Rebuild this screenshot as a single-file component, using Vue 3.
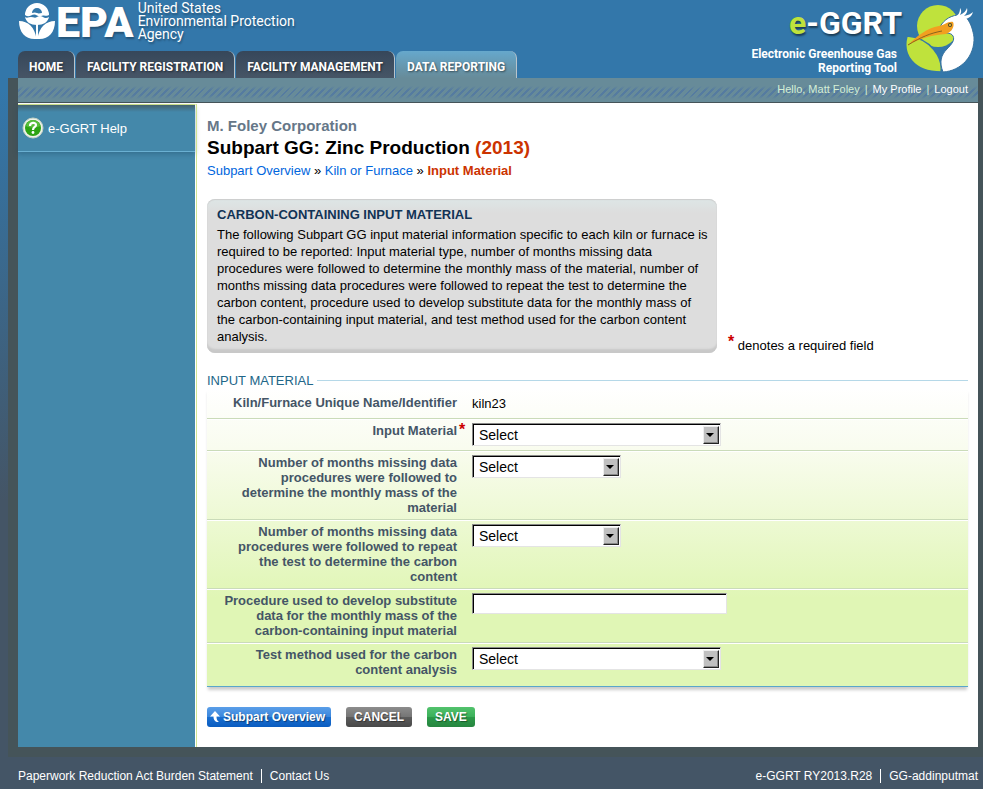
<script setup>
// Subpart GG data entry page: site header, help sidebar and the input
// material form. The form rows are driven by the list below.
import { reactive } from 'vue'

const tabs = [
  { label: 'HOME' },
  { label: 'FACILITY REGISTRATION' },
  { label: 'FACILITY MANAGEMENT' },
  { label: 'DATA REPORTING', active: true },
]

const fields = [
  { id: 'material', type: 'select', wide: true, required: true, label: 'Input Material' },
  {
    id: 'massMonths',
    type: 'select',
    label: 'Number of months missing data procedures were followed to determine the monthly mass of the material',
  },
  {
    id: 'carbonMonths',
    type: 'select',
    label: 'Number of months missing data procedures were followed to repeat the test to determine the carbon content',
  },
  {
    id: 'procedure',
    type: 'text',
    label: 'Procedure used to develop substitute data for the monthly mass of the carbon-containing input material',
  },
  { id: 'testMethod', type: 'select', wide: true, label: 'Test method used for the carbon content analysis' },
]

const form = reactive({ material: '', massMonths: '', carbonMonths: '', procedure: '', testMethod: '' })
</script>

<template>
  <div class="page">
    <header class="header">
      <div class="header-left">
        <a href="#" class="epa">
          <svg class="epa-mark" width="38" height="38" viewBox="0 0 38 38" aria-hidden="true">
            <path d="M7 12a12 12 0 0 1 24 0c-2 1.500-4 0-6 .5s-4 1.500-6 0-4-1-6 0-4 1-6-.5z" fill="#fff" />
            <path d="M14 10a5 5 0 0 1 10 0c-2 0-3 1-5 0s-3-.5-5 0z" fill="#37a" />
            <path d="M7 14c2 1.500 4 0 6 0s4 1.500 6 0 4-1.500 6 0 4 1 6 0c-1 5-5.500 8-12 8S8 19 7 14z" fill="#fff" />
            <path d="M1 18c9 0 16 6 17.500 18C8 37 1 30 1 18zM37 18c-9 0-16 6-17.500 18C30 37 37 30 37 18z" fill="#fff" />
            <path d="M19 21v15" stroke="#fff" stroke-width="2" />
          </svg>
          <span class="epa-name">EPA</span>
          <span class="epa-full">United States<br />Environmental Protection<br />Agency</span>
        </a>
        <nav class="tabs">
          <a v-for="t in tabs" :key="t.label" href="#" class="tab" :class="{ active: t.active }">{{ t.label }}</a>
        </nav>
      </div>
      <div class="brand">
        <div class="brand-text">
          <div class="brand-name"><span>e</span>-GGRT</div>
          <div class="brand-sub">Electronic Greenhouse Gas<br />Reporting Tool</div>
        </div>
        <svg class="heron" width="72" height="74" viewBox="0 0 72 74" aria-hidden="true">
          <circle cx="33" cy="24" r="21" fill="#bfe23c" />
          <path d="M2 34C-3 52 8 70 36 70 38 56 26 36 2 34z" fill="#bfe23c" stroke="#37a" stroke-width="1.500" />
          <path
            d="M34 27C37 20 43 14 53 13 62 12 67 22 69 35 70 54 56 69 38 70 34 60 36 53 42 47 47 42 50 38 48 34 46 30 39 31 34 31z"
            fill="#fff"
            stroke="#37729f"
            stroke-width="1"
          />
          <path d="M48 15c6-1 7-5 7-9 2 3 1 5 0 7 4-2 6-4 7-7 1 4-1 6-3 8 4-1 7-2 9-4-1 4-4 6-7 7-4 1-9 1-13-2z" fill="#fff" />
          <path d="M3 43C12 34 22 26 34 24c6-1 9-5 14-4 2 4-1 10-7 12C27 33 16 36 3 43z" fill="#f29f20" />
          <path d="M3 43c13-8 23-12 34-14" fill="none" stroke="#8b641d" stroke-width="1" />
          <circle cx="45" cy="23" r="2" fill="#47432a" />
          <circle cx="45" cy="23" r="1" fill="#f7d33b" />
        </svg>
      </div>
    </header>

    <div class="frame">
      <div class="user-bar">
        <span class="hello">Hello, Matt Foley</span>
        <span>|</span>
        <a href="#">My Profile</a>
        <span>|</span>
        <a href="#">Logout</a>
      </div>

      <div class="body">
        <aside class="sidebar">
          <a href="#" class="help">
            <svg width="22" height="22" viewBox="0 0 22 22" aria-hidden="true">
              <circle cx="11" cy="11" r="10" fill="#eef3ea" stroke="#c5d2c4" />
              <circle cx="11" cy="11" r="8" fill="#2da313" />
              <path d="M4 9a7 6 0 0 1 14 0c-4 2-10 2-14 0z" fill="#58bd3a" />
              <path d="M8 9c0-4 6-4 6-1 0 2-3 2-3 5" fill="none" stroke="#fff" stroke-width="2.200" />
              <circle cx="11" cy="15.500" r="1.400" fill="#fff" />
            </svg>
            e-GGRT Help
          </a>
        </aside>

        <main class="content">
          <div class="company">M. Foley Corporation</div>
          <h1>Subpart GG: Zinc Production <span>(2013)</span></h1>
          <nav class="crumbs">
            <a href="#">Subpart Overview</a> » <a href="#">Kiln or Furnace</a> » <strong>Input Material</strong>
          </nav>

          <div class="intro">
            <section class="info">
              <h2>CARBON-CONTAINING INPUT MATERIAL</h2>
              <p>
                The following Subpart GG input material information specific to each kiln or furnace is
                required to be reported: Input material type, number of months missing data
                procedures were followed to determine the monthly mass of the material, number of
                months missing data procedures were followed to repeat the test to determine the
                carbon content, procedure used to develop substitute data for the monthly mass of
                the carbon-containing input material, and test method used for the carbon content
                analysis.
              </p>
            </section>
            <div class="required-note"><span class="star">*</span> denotes a required field</div>
          </div>

          <form @submit.prevent>
            <div class="legend">INPUT MATERIAL</div>
            <div class="rows">
              <div class="row first">
                <span class="label">Kiln/Furnace Unique Name/Identifier</span>
                <span class="value">kiln23</span>
              </div>
              <div v-for="f in fields" :key="f.id" class="row">
                <label class="label" :for="f.id">{{ f.label }}<span v-if="f.required" class="star">*</span></label>
                <span v-if="f.type === 'select'" class="select" :class="{ wide: f.wide }">
                  <select :id="f.id" v-model="form[f.id]">
                    <option value="">Select</option>
                  </select>
                </span>
                <input v-else :id="f.id" v-model="form[f.id]" type="text" />
              </div>
            </div>

            <div class="actions">
              <button type="button" class="btn blue">
                <svg width="10" height="12" viewBox="0 0 10 12" aria-hidden="true">
                  <path d="M5 0l5 5.500H6.500C6.500 8 7 10 9 11 5.500 11.500 3.500 9 3.500 5.500H0z" fill="#fff" />
                </svg>
                Subpart Overview
              </button>
              <button type="button" class="btn gray">CANCEL</button>
              <button type="submit" class="btn green">SAVE</button>
            </div>
          </form>
        </main>
      </div>
    </div>

    <footer class="footer">
      <div class="footer-group">
        <a href="#">Paperwork Reduction Act Burden Statement</a>
        <a href="#">Contact Us</a>
      </div>
      <div class="footer-group">
        <span>e-GGRT RY2013.R28</span>
        <span>GG-addinputmat</span>
      </div>
    </footer>
  </div>
</template>

<style>
body {
  margin: 0;
  background: #456;
}
</style>

<style scoped>
.page {
  min-height: 100vh;
  background: linear-gradient(#37a 0, #37a 90px, #456 500px);
  font-family: "Liberation Sans", Arial, sans-serif;
  font-size: 13px;
  color: #000;
}
a {
  color: #06d;
  text-decoration: none;
}

/* header */
.header {
  display: flex;
  justify-content: space-between;
  height: 78px;
  padding: 0 6px 0 18px;
  color: #fff;
}
.header-left {
  display: flex;
  flex-direction: column;
  justify-content: space-between;
}
.epa {
  display: flex;
  color: #fff;
  text-shadow: 1px 2px 2px rgba(0, 0, 0, 0.3);
}
.epa-mark {
  margin-top: 3px;
}
.epa-name {
  font: 900 43px/44px Roboto, "Liberation Sans", sans-serif;
}
.epa-full {
  margin: 2px 0 0 4px;
  font: 14px/13px Roboto, "Liberation Sans", sans-serif;
}
.tabs {
  display: flex;
  gap: 1px;
}
.tab {
  height: 27px;
  padding: 0 11px;
  border-right: 1px solid #b8c4cc;
  border-radius: 7px 7px 0 0;
  background: linear-gradient(#36475a, #465566);
  color: #fff;
  font: bold 12px/32px Roboto, "Liberation Sans", sans-serif;
  text-shadow: 1px 1px 2px rgba(0, 0, 0, 0.5);
}
.tab.active {
  background: linear-gradient(#66a8cc, #678b99);
}
.brand {
  display: flex;
  gap: 3px;
  text-align: right;
}
.brand-name {
  font: bold 32px/47px Roboto, "Liberation Sans", sans-serif;
  text-shadow: 1px 2px 2px rgba(0, 0, 0, 0.5);
}
.brand-name span {
  color: #bfe23c;
}
.brand-sub {
  padding-right: 5px;
  font: bold 12px/14px Roboto, "Liberation Sans", sans-serif;
}
.heron {
  margin-top: 2px;
}

/* framed page area */
.frame {
  margin-left: 8px;
  border: solid #455459;
  border-width: 0 5px 10px 10px;
}
.user-bar {
  display: flex;
  justify-content: flex-end;
  gap: 5px;
  height: 24px;
  padding-right: 10px;
  border-bottom: 1px solid #455459;
  background:
    linear-gradient(#678b99 8px, transparent 12px, transparent 17px, #678b99 21px),
    repeating-linear-gradient(135deg, #678b99 0 3px, #557ba0 3px 5px);
  color: #d5efd5;
  font-size: 11px;
  line-height: 22px;
}
.user-bar a {
  color: #fff;
}
.body {
  display: flex;
  padding-top: 1px;
  background: #fff;
}
.sidebar {
  flex: none;
  width: 177px;
  border-top: 1px solid #d5e88c;
  border-right: 1px solid #fff;
  background: #48a;
}
.help {
  display: flex;
  align-items: center;
  gap: 4px;
  height: 46px;
  padding-left: 4px;
  border-bottom: 1px solid #6ab0d2;
  background: linear-gradient(#44616e, #48a 7px);
  box-shadow: 0 2px 5px rgba(30, 70, 100, 0.4);
  color: #fff;
}
.content {
  flex: 1;
  padding: 13px 10px 20px;
  border-left: 1px solid #cfe593;
}
.company {
  color: #678;
  font-size: 15px;
  font-weight: bold;
  line-height: 18px;
}
h1 {
  margin: 0;
  font-size: 19px;
  line-height: 25px;
}
h1 span,
.crumbs strong {
  color: #c30;
}
.crumbs {
  line-height: 21px;
}

/* intro */
.intro {
  display: flex;
  align-items: flex-end;
  gap: 11px;
  margin-top: 18px;
}
.info {
  box-sizing: border-box;
  width: 510px;
  padding: 8px 10px;
  border-radius: 8px;
  background: linear-gradient(#dde6e6, #ddd 14px);
  box-shadow: inset 0 1px 1px #ccc, inset 0 -5px 2px -1px #c8c8c8;
}
.info h2 {
  margin: 0;
  color: #135;
  font-size: 13px;
  line-height: 16px;
}
.info p {
  margin: 3px -4px 0 0;
  line-height: 17px;
}
.star {
  color: #c00;
  font-size: 16px;
  font-weight: bold;
  line-height: 10px;
}
.required-note .star {
  vertical-align: 3px;
}

/* form */
.legend {
  display: flex;
  align-items: center;
  gap: 4px;
  margin-top: 20px;
  color: #268;
  line-height: 15px;
}
.legend::after {
  flex: 1;
  height: 1px;
  background: #b5d8e8;
  content: "";
}
.rows {
  border-bottom: 1px solid #59a6cb;
  background: linear-gradient(#fff, #f9fcef 60px, #e0f6b5 210px);
  box-shadow: 0 4px 3px -1px #ccc;
}
.row {
  display: grid;
  grid-template-columns: 250px 1fr;
  gap: 15px;
  align-items: start;
  padding: 4px 0;
  border-bottom: 1px solid #cadbb9;
}
.row + .row {
  border-top: 1px solid #fff;
  padding-top: 3px;
}
.row.first {
  padding: 7px 0 5px;
}
.row:last-child {
  padding-bottom: 9px;
  border-bottom: 0;
}
.label {
  position: relative;
  padding-left: 10px;
  color: #456;
  font-weight: bold;
  line-height: 15px;
  text-align: right;
}
.label .star {
  position: absolute;
  top: 2px;
  left: 100%;
  margin-left: 2px;
}
.value {
  line-height: 18px;
}
.select {
  position: relative;
  width: 249px;
  height: 23px;
}
.select:not(.wide) {
  width: 149px;
}
select,
input {
  box-sizing: border-box;
  margin: 0;
  border: 1px solid;
  border-color: #888 #e4e4e4 #e4e4e4 #888;
  border-radius: 0;
  background: #fff;
  box-shadow: inset 1px 1px #000;
  color: #000;
  font: 14px "Liberation Sans", Arial, sans-serif;
}
select {
  width: 100%;
  height: 23px;
  padding: 0 0 0 6px;
  appearance: none;
}
input {
  width: 255px;
  height: 21px;
}
.select::before {
  position: absolute;
  top: 3px;
  right: 2px;
  box-sizing: border-box;
  width: 16px;
  height: 18px;
  border: 1px solid;
  border-color: #eee #222 #222 #eee;
  background: #c0c0c0;
  box-shadow: inset -1px -1px #888;
  content: "";
  pointer-events: none;
}
.select::after {
  position: absolute;
  top: 10px;
  right: 7px;
  border: 4px solid transparent;
  border-top-color: #000;
  border-bottom: 0;
  content: "";
  pointer-events: none;
}
.actions {
  display: flex;
  gap: 15px;
  margin-top: 20px;
}
.btn {
  display: flex;
  align-items: center;
  gap: 3px;
  height: 20px;
  padding: 0 8px;
  border: 0;
  border-radius: 3px;
  color: #fff;
  font: bold 12px "Liberation Sans", Arial, sans-serif;
  text-shadow: 1px 1px 1px rgba(0, 0, 0, 0.4);
}
.btn.blue {
  padding: 0 6px 0 3px;
  background: linear-gradient(#5a9ee8, #3a86dc 50%, #1a6fd0 50%, #0a5cc0);
}
.btn.gray {
  background: linear-gradient(#8c8c8c, #757575 50%, #5c5c5c 50%, #484848);
}
.btn.green {
  background: linear-gradient(#52c26c, #3bb05a 50%, #2b9a48 50%, #268540);
}

/* footer */
.footer {
  display: flex;
  justify-content: space-between;
  padding: 12px 5px 5px 18px;
  color: #fff;
  font-size: 12px;
  line-height: 14px;
}
.footer-group {
  display: flex;
}
.footer-group > * {
  color: #fff;
}
.footer-group > * + * {
  margin-left: 8px;
  padding-left: 8px;
  border-left: 1px solid #fff;
}
</style>
